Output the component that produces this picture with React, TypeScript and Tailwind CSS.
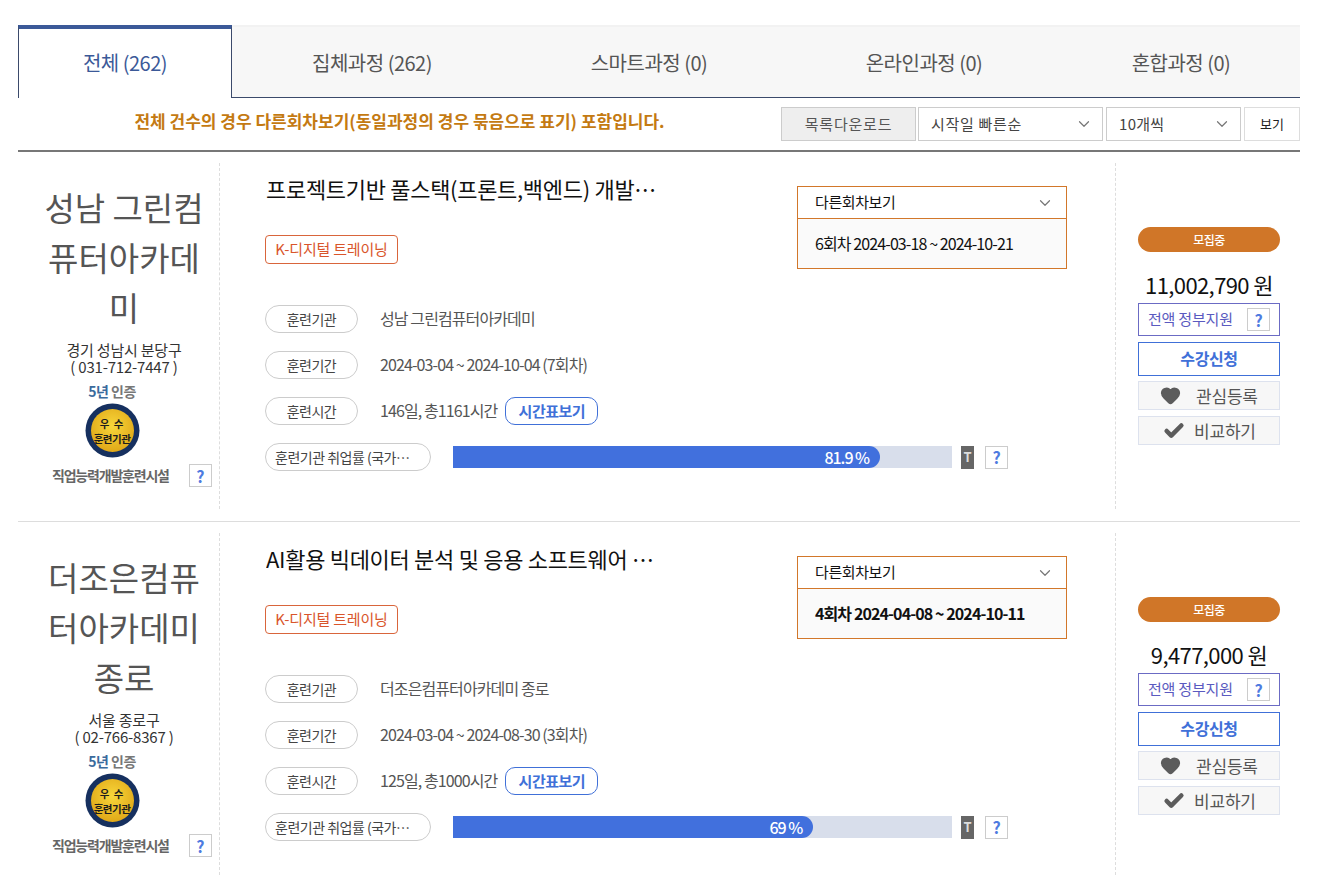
import { ChevronDown, Check, Heart } from 'lucide-react'

interface Course {
  academy: string
  region: string
  phone: string
  title: string
  session: string
  sessionBold?: boolean
  name: string
  period: string
  hours: string
  barWidth: number
  rateLabel: string
  price: string
}

const courses: Course[] = [
  {
    academy: '성남 그린컴퓨터아카데미',
    region: '경기 성남시 분당구',
    phone: '( 031-712-7447 )',
    title: '프로젝트기반 풀스택(프론트,백엔드) 개발자 양성과정',
    session: '6회차 2024-03-18 ~ 2024-10-21',
    name: '성남 그린컴퓨터아카데미',
    period: '2024-03-04 ~ 2024-10-04 (7회차)',
    hours: '146일, 총1161시간',
    barWidth: 85.6,
    rateLabel: '81.9 %',
    price: '11,002,790 원',
  },
  {
    academy: '더조은컴퓨터아카데미 종로',
    region: '서울 종로구',
    phone: '( 02-766-8367 )',
    title: 'AI활용 빅데이터 분석 및 응용 소프트웨어 개발자 양성과정',
    session: '4회차 2024-04-08 ~ 2024-10-11',
    sessionBold: true,
    name: '더조은컴퓨터아카데미 종로',
    period: '2024-03-04 ~ 2024-08-30 (3회차)',
    hours: '125일, 총1000시간',
    barWidth: 72.2,
    rateLabel: '69 %',
    price: '9,477,000 원',
  },
]

const tabs = [
  { label: '전체 (262)', width: 'w-[214px]' },
  { label: '집체과정 (262)', width: 'w-[280px]' },
  { label: '스마트과정 (0)', width: 'w-[274px]' },
  { label: '온라인과정 (0)', width: 'w-[276px]' },
  { label: '혼합과정 (0)', width: 'w-[238px]' },
]

function HelpBox({ className = '' }: { className?: string }) {
  return (
    <span className={`flex h-[23px] w-[23px] shrink-0 items-center justify-center border border-[#ccc] bg-white text-[16px] font-bold text-[#4f7be0] ${className}`}>
      ?
    </span>
  )
}

function Medal() {
  return (
    <div className="relative h-[55px] w-[55px]">
      <svg viewBox="0 0 55 55" className="h-full w-full">
        <defs>
          <radialGradient id="gold" cx="50%" cy="40%" r="60%">
            <stop offset="0%" stopColor="#f8d63a" />
            <stop offset="100%" stopColor="#e0a818" />
          </radialGradient>
        </defs>
        <circle cx="27.5" cy="27.5" r="27" fill="#16305f" />
        <circle cx="27.5" cy="27.5" r="21.5" fill="url(#gold)" />
      </svg>
      <div className="absolute inset-0 flex flex-col items-center justify-center text-[10.5px] font-bold leading-[15px] tracking-[-0.5px] text-[#1c1c1c]">
        <span className="tracking-[1px]">우 수</span>
        <span>훈련기관</span>
      </div>
    </div>
  )
}

function Pill({ children, wide }: { children: React.ReactNode; wide?: boolean }) {
  return (
    <span className={`flex h-[28px] shrink-0 items-center rounded-full border border-[#ccc] bg-white text-[14px] tracking-[-0.5px] text-[#444] ${wide ? 'w-[166px] pl-[9px]' : 'w-[93px] justify-center'}`}>
      {children}
    </span>
  )
}

function CourseRow({ course, divider }: { course: Course; divider: boolean }) {
  return (
    <div className={`flex h-[370px] pt-[11px] pb-[12px] ${divider ? 'border-b border-[#ddd]' : ''}`}>
      {/* Academy column */}
      <div className="flex w-[202px] shrink-0 flex-col items-center border-r border-dashed border-[#ddd] pl-[11px]">
        <div className="mt-[19px] w-[166px] break-all text-center text-[33px] leading-[50px] text-[#555]">
          {course.academy}
        </div>
        <div className="mt-[9px] text-center text-[15px] leading-[17px] tracking-[-0.2px] text-[#333]">
          <div>{course.region}</div>
          <div>{course.phone}</div>
        </div>
        <div className="mt-[6px] mr-[24px] text-[14px] font-bold leading-[20px] tracking-[-0.5px] text-[#777]">
          <span className="text-[#3b6a9c]">5년</span> 인증
        </div>
        <div className="mr-[24px] mt-[2px]">
          <Medal />
        </div>
        <div className="mt-[6px] flex items-center self-start">
          <span className="ml-[23px] whitespace-nowrap text-[14px] font-bold tracking-[-1.2px] text-[#666]">직업능력개발훈련시설</span>
          <HelpBox className="ml-[20px]" />
        </div>
      </div>

      {/* Course info column */}
      <div className="flex w-[896px] shrink-0 border-r border-dashed border-[#ddd] pl-[45px]">
        <div className="w-[532px] shrink-0">
          <div className="mt-[9px] ml-[1px] w-[394px] truncate text-[22px] leading-[32px] tracking-[-0.3px] text-[#111]">
            {course.title}
          </div>
          <div className="mt-[31px] flex h-[29px] w-[133px] items-center justify-center rounded-[4px] border border-[#d9653b] text-[15px] tracking-[-0.2px] text-[#d9552b]">
            K-디지털 트레이닝
          </div>
          <div className="mt-[41px] flex flex-col gap-[18px]">
            <div className="flex items-center">
              <Pill>훈련기관</Pill>
              <span className="ml-[22px] pb-[2px] text-[16px] tracking-[-0.9px] text-[#555]">{course.name}</span>
            </div>
            <div className="flex items-center">
              <Pill>훈련기간</Pill>
              <span className="ml-[22px] pb-[2px] text-[16px] tracking-[-0.9px] text-[#555]">{course.period}</span>
            </div>
            <div className="flex items-center">
              <Pill>훈련시간</Pill>
              <span className="ml-[22px] pb-[2px] text-[16px] tracking-[-0.9px] text-[#555]">{course.hours}</span>
              <span className="ml-[8px] flex h-[28px] w-[93px] items-center justify-center rounded-[10px] border border-[#4070d8] text-[15px] font-bold tracking-[-0.5px] text-[#4070d8]">
                시간표보기
              </span>
            </div>
            <div className="flex items-center">
              <Pill wide>
                <span className="w-[141px] truncate">훈련기관 취업률 (국가공인)</span>
              </Pill>
              <div className="ml-[22px] h-[22px] w-[499px] shrink-0 bg-[#d8deeb]">
                <div
                  className="flex h-full items-center justify-end rounded-r-full bg-[#4170dd] pr-[11px] text-[16px] font-medium tracking-[-1px] text-white"
                  style={{ width: `${course.barWidth}%` }}
                >
                  {course.rateLabel}
                </div>
              </div>
              <span className="ml-[9px] flex h-[23px] w-[13px] shrink-0 items-center justify-center bg-[#666] text-[13px] font-bold text-[#ddd]">T</span>
              <HelpBox className="ml-[11px]" />
            </div>
          </div>
        </div>
        <div className="mt-[23px] h-[83px] w-[270px] shrink-0 border border-[#d2772a]">
          <div className="flex h-[32px] items-center justify-between border-b border-[#d2772a] pl-[17px] pr-[12px] text-[15px] tracking-[-0.4px] text-[#111]">
            <span>다른회차보기</span>
            <ChevronDown size={18} strokeWidth={1.6} className="text-[#777]" />
          </div>
          <div className={`flex h-[49px] items-center bg-[#fafafa] pb-[2px] pl-[17px] text-[16px] tracking-[-0.9px] text-[#111] ${course.sessionBold ? 'font-bold' : ''}`}>
            {course.session}
          </div>
        </div>
      </div>

      {/* Price column */}
      <div className="ml-[22px] w-[142px] shrink-0">
        <div className="mt-[64px] flex h-[25px] items-center justify-center rounded-full bg-[#d07628] text-[12px] font-medium tracking-[-0.5px] text-white">
          모집중
        </div>
        <div className="mt-[16px] text-center text-[22px] leading-[32px] tracking-[-0.6px] text-[#111]">{course.price}</div>
        <div className="mt-[3px] flex h-[33px] items-center justify-between border border-[#6b6bc4] pl-[9px] pr-[9px] text-[15px] tracking-[-0.2px] text-[#5a5ac0]">
          <span>전액 정부지원</span>
          <HelpBox className="h-[22px] w-[22px]" />
        </div>
        <div className="mt-[6px] flex h-[34px] items-center justify-center border border-[#4070d8] pb-[2px] text-[16px] font-bold tracking-[-0.4px] text-[#4070d8]">
          수강신청
        </div>
        <div className="mt-[5px] flex h-[29px] items-center border border-[#dde2ee] bg-[#f7f7f7] pl-[21px] text-[17px] tracking-[-0.2px] text-[#555]">
          <Heart size={21} fill="#5c5c5c" stroke="#5c5c5c" />
          <span className="ml-[15px]">관심등록</span>
        </div>
        <div className="mt-[6px] flex h-[29px] items-center border border-[#dde2ee] bg-[#f7f7f7] pl-[24px] text-[17px] tracking-[-0.2px] text-[#555]">
          <Check size={22} strokeWidth={5} className="text-[#5c5c5c]" />
          <span className="ml-[9px]">비교하기</span>
        </div>
      </div>
    </div>
  )
}

export default function App() {
  return (
    <div className="h-screen overflow-hidden bg-white pl-[18px] pt-[25px] font-['Noto_Sans_CJK_KR','Noto_Sans',sans-serif]">
      <div className="w-[1282px]">
        {/* Tabs */}
        <div className="flex h-[73px]">
          {tabs.map((tab, i) =>
            i === 0 ? (
              <div key={tab.label} className={`${tab.width} flex items-center justify-center border-x border-t-4 border-x-[#3b4a6b] border-t-[#3b5998] bg-white pb-[2px] text-[20px] tracking-[-0.5px] text-[#3b5998]`}>
                {tab.label}
              </div>
            ) : (
              <div key={tab.label} className={`${tab.width} flex items-center justify-center border-t-2 border-b border-t-[#f2f2f2] border-b-[#3b4a6b] bg-[#f7f7f7] pt-[1px] text-[20px] tracking-[-0.5px] text-[#555]`}>
                {tab.label}
              </div>
            ),
          )}
        </div>

        {/* Toolbar */}
        <div className="flex h-[54px] items-start border-b-2 border-[#777] pt-[9px]">
          <div className="w-[763px] pt-[2px] text-center text-[17px] font-bold leading-[24px] text-[#c47a12]">
            전체 건수의 경우 다른회차보기(동일과정의 경우 묶음으로 표기) 포함입니다.
          </div>
          <div className="flex h-[34px] w-[135px] items-center justify-center border border-[#ccc] bg-[#eee] text-[15px] tracking-[0.8px] text-[#555]">
            목록다운로드
          </div>
          <div className="ml-[2px] flex h-[34px] w-[185px] items-center justify-between border border-[#ccc] pl-[12px] pr-[9px] text-[15px] tracking-[0.7px] text-[#444]">
            <span>시작일 빠른순</span>
            <ChevronDown size={18} strokeWidth={1.6} className="text-[#777]" />
          </div>
          <div className="ml-[3px] flex h-[34px] w-[135px] items-center justify-between border border-[#ccc] pl-[12px] pr-[9px] text-[15px] tracking-[0.3px] text-[#444]">
            <span>10개씩</span>
            <ChevronDown size={18} strokeWidth={1.6} className="text-[#777]" />
          </div>
          <div className="ml-[3px] flex h-[34px] w-[56px] items-center justify-center border border-[#ddd] text-[13px] text-[#222]">
            보기
          </div>
        </div>

        {courses.map((course, i) => (
          <CourseRow key={course.title} course={course} divider={i === 0} />
        ))}
      </div>
    </div>
  )
}
